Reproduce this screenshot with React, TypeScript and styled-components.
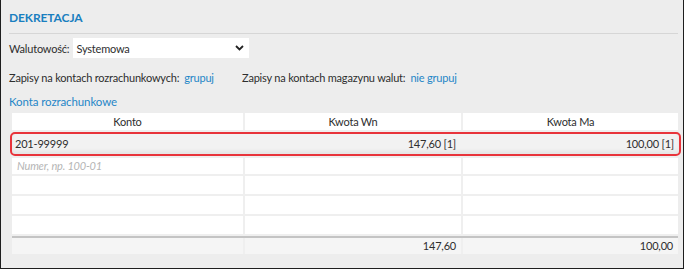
import React from 'react';
import styled, { createGlobalStyle } from 'styled-components';

const GlobalStyle = createGlobalStyle`
  html, body {
    margin: 0;
    padding: 0;
    background: #ededed;
  }
  body {
    font-family: Lato, "Noto Sans", sans-serif;
    font-size: 11px;
    letter-spacing: -0.2px;
    color: #2e2e2e;
  }
`;

const Panel = styled.div`
  box-sizing: border-box;
  width: 684px;
  height: 269px;
  background: #ededed;
  border: 1px solid #1e1e1e;
  border-top: none;
  padding: 0 4px 0 8px;
  white-space: nowrap;
`;

const Title = styled.div`
  font-weight: 700;
  font-size: 12px;
  letter-spacing: -0.1px;
  color: #1a7fc0;
  padding: 9px 0 6px;
  margin-right: 1px;
  border-bottom: 1px solid #d6d6d6;
  line-height: 18px;
`;

const FieldRow = styled.div`
  display: flex;
  align-items: center;
  gap: 4px;
  margin-top: 4px;
  height: 20px;
`;

const Select = styled.div`
  width: 176px;
  height: 20px;
  background: #fff;
  display: flex;
  align-items: center;
  justify-content: space-between;
  padding: 0 5px 0 3px;
  box-sizing: border-box;
`;

const OptionsRow = styled.div`
  display: flex;
  margin-top: 10px;
  line-height: 19px;
`;

const Option = styled.div<{ $width?: number }>`
  width: ${({ $width }) => ($width ? `${$width}px` : 'auto')};
`;

const Link = styled.span`
  color: #1f86c7;
  margin-left: 5px;
`;

const Section = styled.div`
  color: #1f86c7;
  font-size: 11.5px;
  letter-spacing: -0.1px;
  margin-top: 5px;
  line-height: 19px;
`;

const Table = styled.div`
  margin: 2px 0 0 3px;
  width: 666px;
  display: grid;
  grid-template-columns: 231px 216px 1fr;
  column-gap: 2px;
  row-gap: 2px;
  background: #efefef;
`;

const HeadCell = styled.div`
  background: #fff;
  text-align: center;
  height: 17px;
  line-height: 18px;
`;

const Cell = styled.div<{ $short?: boolean }>`
  background: #fff;
  height: ${({ $short }) => ($short ? 16 : 18)}px;
  line-height: ${({ $short }) => ($short ? 16 : 18)}px;
  padding: 0 5px;
`;

const Placeholder = styled.span`
  color: #b5b5b5;
  font-style: italic;
`;

const ActiveRow = styled.div`
  grid-column: 1 / -1;
  display: grid;
  grid-template-columns: 231px 216px 1fr;
  column-gap: 2px;
  margin: 0 -3px 0 -2px;
  height: 20px;
  border: 2px solid #e8343b;
  border-radius: 5px;
  background: #f2f2f2;
  box-shadow: inset 0 -3px 4px rgba(0, 0, 0, 0.06);
  line-height: 20px;
`;

const ActiveCell = styled.div<{ $right?: boolean }>`
  padding: 0 5px 0 ${({ $right }) => ($right ? '5px' : '3px')};
  text-align: ${({ $right }) => ($right ? 'right' : 'left')};
`;

const Footer = styled.div`
  grid-column: 1 / -1;
  display: grid;
  grid-template-columns: 231px 216px 1fr;
  column-gap: 2px;
  border-top: 2px solid #c4c4c4;
  background: #efefef;
`;

const FootCell = styled.div<{ $right?: boolean }>`
  background: #f5f5f5;
  height: 16px;
  line-height: 16px;
  padding: 0 5px;
  text-align: ${({ $right }) => ($right ? 'right' : 'left')};
`;

const Chevron = () => (
  <svg width="9" height="6" viewBox="0 0 9 6">
    <path d="M1 1 L4.5 4.5 L8 1" stroke="#222" strokeWidth="1.8" fill="none" />
  </svg>
);

export default function App() {
  const emptyRows = [0, 1, 2];
  return (
    <Panel>
      <GlobalStyle />
      <Title>DEKRETACJA</Title>
      <FieldRow>
        <span>Walutowość:</span>
        <Select>
          <span>Systemowa</span>
          <Chevron />
        </Select>
      </FieldRow>
      <OptionsRow>
        <Option $width={233}>
          Zapisy na kontach rozrachunkowych:<Link>grupuj</Link>
        </Option>
        <Option>
          Zapisy na kontach magazynu walut:<Link>nie grupuj</Link>
        </Option>
      </OptionsRow>
      <Section>Konta rozrachunkowe</Section>
      <Table>
        <HeadCell>Konto</HeadCell>
        <HeadCell>Kwota Wn</HeadCell>
        <HeadCell>Kwota Ma</HeadCell>
        <ActiveRow>
          <ActiveCell>201-99999</ActiveCell>
          <ActiveCell $right>147,60 [1]</ActiveCell>
          <ActiveCell $right>100,00 [1]</ActiveCell>
        </ActiveRow>
        <Cell $short>
          <Placeholder>Numer, np. 100-01</Placeholder>
        </Cell>
        <Cell $short />
        <Cell $short />
        {emptyRows.map((r) => (
          <React.Fragment key={r}>
            <Cell />
            <Cell />
            <Cell />
          </React.Fragment>
        ))}
        <Footer>
          <FootCell />
          <FootCell $right>147,60</FootCell>
          <FootCell $right>100,00</FootCell>
        </Footer>
      </Table>
    </Panel>
  );
}
